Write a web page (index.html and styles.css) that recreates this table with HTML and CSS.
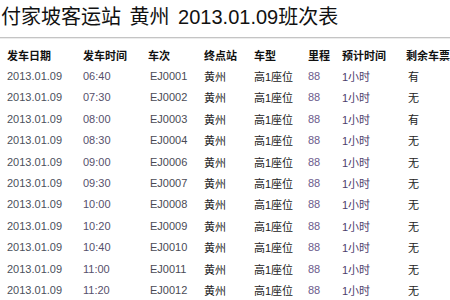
FILE: index.html
```html
<!DOCTYPE html>
<html lang="zh">
<head>
<meta charset="utf-8">
<link rel="stylesheet" href="styles.css">
</head>
<body>
<h1 class="title">付家坡客运站 黄州 2013.01.09班次表</h1>
<div class="table">
  <div class="row head">
    <span>发车日期</span><span>发车时间</span><span>车次</span><span>终点站</span><span>车型</span><span>里程</span><span>预计时间</span><span>剩余车票</span>
  </div>
  <div class="row"><span class="d">2013.01.09</span><span class="t">06:40</span><span class="n">EJ0001</span><span class="k">黄州</span><span class="k">高1座位</span><span class="m">88</span><span class="h">1小时</span><span class="k s">有</span></div>
  <div class="row"><span class="d">2013.01.09</span><span class="t">07:30</span><span class="n">EJ0002</span><span class="k">黄州</span><span class="k">高1座位</span><span class="m">88</span><span class="h">1小时</span><span class="k s">无</span></div>
  <div class="row"><span class="d">2013.01.09</span><span class="t">08:00</span><span class="n">EJ0003</span><span class="k">黄州</span><span class="k">高1座位</span><span class="m">88</span><span class="h">1小时</span><span class="k s">有</span></div>
  <div class="row"><span class="d">2013.01.09</span><span class="t">08:30</span><span class="n">EJ0004</span><span class="k">黄州</span><span class="k">高1座位</span><span class="m">88</span><span class="h">1小时</span><span class="k s">无</span></div>
  <div class="row"><span class="d">2013.01.09</span><span class="t">09:00</span><span class="n">EJ0006</span><span class="k">黄州</span><span class="k">高1座位</span><span class="m">88</span><span class="h">1小时</span><span class="k s">无</span></div>
  <div class="row"><span class="d">2013.01.09</span><span class="t">09:30</span><span class="n">EJ0007</span><span class="k">黄州</span><span class="k">高1座位</span><span class="m">88</span><span class="h">1小时</span><span class="k s">无</span></div>
  <div class="row"><span class="d">2013.01.09</span><span class="t">10:00</span><span class="n">EJ0008</span><span class="k">黄州</span><span class="k">高1座位</span><span class="m">88</span><span class="h">1小时</span><span class="k s">无</span></div>
  <div class="row"><span class="d">2013.01.09</span><span class="t">10:20</span><span class="n">EJ0009</span><span class="k">黄州</span><span class="k">高1座位</span><span class="m">88</span><span class="h">1小时</span><span class="k s">无</span></div>
  <div class="row"><span class="d">2013.01.09</span><span class="t">10:40</span><span class="n">EJ0010</span><span class="k">黄州</span><span class="k">高1座位</span><span class="m">88</span><span class="h">1小时</span><span class="k s">无</span></div>
  <div class="row"><span class="d">2013.01.09</span><span class="t">11:00</span><span class="n">EJ0011</span><span class="k">黄州</span><span class="k">高1座位</span><span class="m">88</span><span class="h">1小时</span><span class="k s">无</span></div>
  <div class="row"><span class="d">2013.01.09</span><span class="t">11:20</span><span class="n">EJ0012</span><span class="k">黄州</span><span class="k">高1座位</span><span class="m">88</span><span class="h">1小时</span><span class="k s">无</span></div>
</div>
</body>
</html>
```
FILE: styles.css
```css
html, body {
  margin: 0;
  padding: 0;
  background: #fff;
  font-family: "Liberation Sans", "Noto Sans CJK SC", sans-serif;
  overflow: hidden;
}
.title {
  margin: 0;
  padding: 5px 0 8px 1px;
  height: 24px;
  line-height: 24px;
  font-size: 20px;
  font-weight: normal;
  color: #111;
  word-spacing: 3px;
  border-bottom: 1px solid #c4c4c4;
  box-shadow: 0 1px 0 #ececec;
  white-space: nowrap;
}
.table {
  margin-top: 6px;
  padding-left: 7px;
}
.row {
  display: grid;
  grid-template-columns: 76px 65px 56px 50px 54px 34px 64px 1fr;
  height: 21.4px;
  align-items: center;
  font-size: 11px;
  white-space: nowrap;
}
.head {
  font-weight: bold;
  color: #111;
}
.d { color: #4b505c; }
.t { color: #56506c; }
.n { color: #4a4a55; padding-left: 2px; }
.k { color: #222; }
.m { color: #6b5c8c; }
.h { color: #4d3d6b; }
.s { padding-left: 2px; }
```
